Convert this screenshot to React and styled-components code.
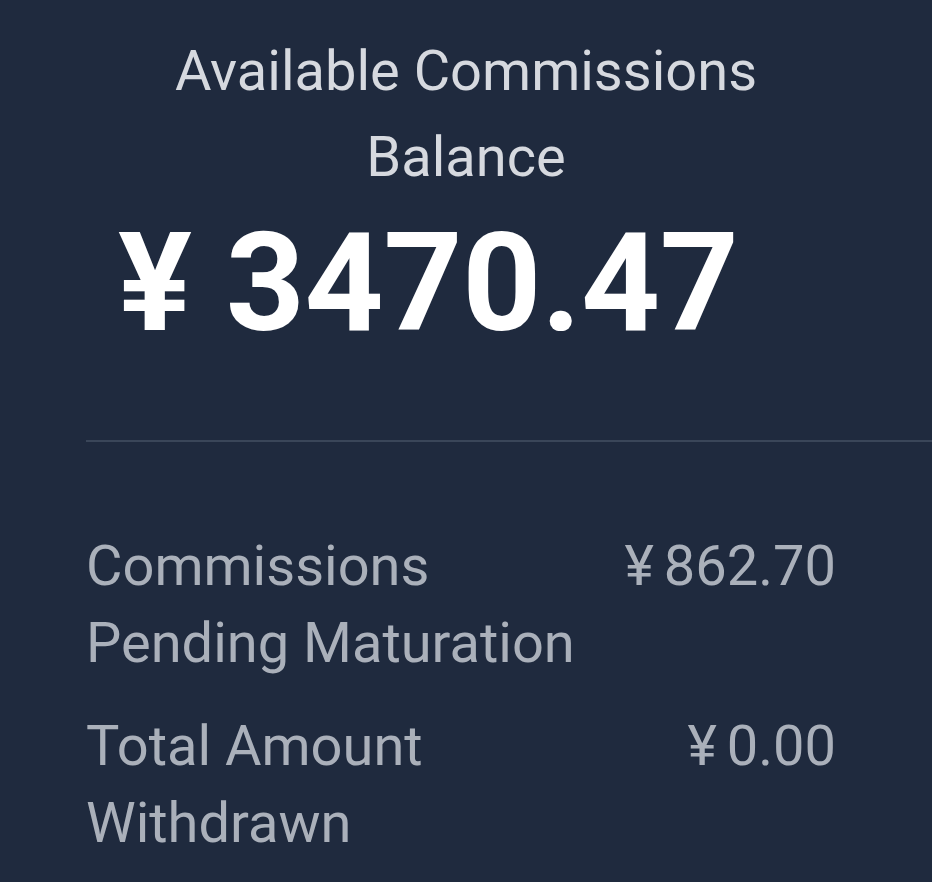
import React from "react";
import styled, { createGlobalStyle } from "styled-components";

const Global = createGlobalStyle`
  html, body { margin: 0; padding: 0; background: #1f2a3e; }
  body { font-family: Roboto, "Liberation Sans", sans-serif; }
`;

const Page = styled.div`
  width: 932px;
  height: 882px;
  overflow: hidden;
  background: #1f2a3e;
  padding-top: 28px;
  box-sizing: border-box;
`;

const Title = styled.div`
  text-align: center;
  font-size: 56px;
  line-height: 86px;
  color: #d6d9df;
  width: 640px;
  margin: 0 auto;
`;

const Amount = styled.div`
  padding-left: 118px;
  font-size: 138px;
  font-weight: 700;
  line-height: 166px;
  color: #ffffff;
  letter-spacing: -0.3px;
`;

const Currency = styled.span`
  margin-right: 34px;
`;

const Divider = styled.hr`
  margin: 74px 0 0 86px;
  border: none;
  height: 2px;
  background: #3a4659;
`;

const List = styled.div`
  padding: 86px 96px 0 86px;
  display: flex;
  flex-direction: column;
  gap: 26px;
`;

const Row = styled.div`
  display: flex;
  justify-content: space-between;
  align-items: flex-start;
  font-size: 56px;
  line-height: 77px;
  color: #aab0ba;
`;

const Label = styled.div`
  width: 520px;
`;

const Value = styled.div`
  white-space: nowrap;
`;

const Yen = styled.span`
  margin-right: 10px;
`;

const rows = [
  { label: ["Commissions", "Pending Maturation"], value: "862.70" },
  { label: ["Total Amount", "Withdrawn"], value: "0.00" },
];

export default function App() {
  return (
    <>
      <Global />
      <Page>
        <Title>Available Commissions Balance</Title>
        <Amount>
          <Currency>¥</Currency>3470.47
        </Amount>
        <Divider />
        <List>
          {rows.map((r) => (
            <Row key={r.value}>
              <Label>
                {r.label[0]}
                <br />
                {r.label[1]}
              </Label>
              <Value>
                <Yen>¥</Yen>
                {r.value}
              </Value>
            </Row>
          ))}
        </List>
      </Page>
    </>
  );
}
